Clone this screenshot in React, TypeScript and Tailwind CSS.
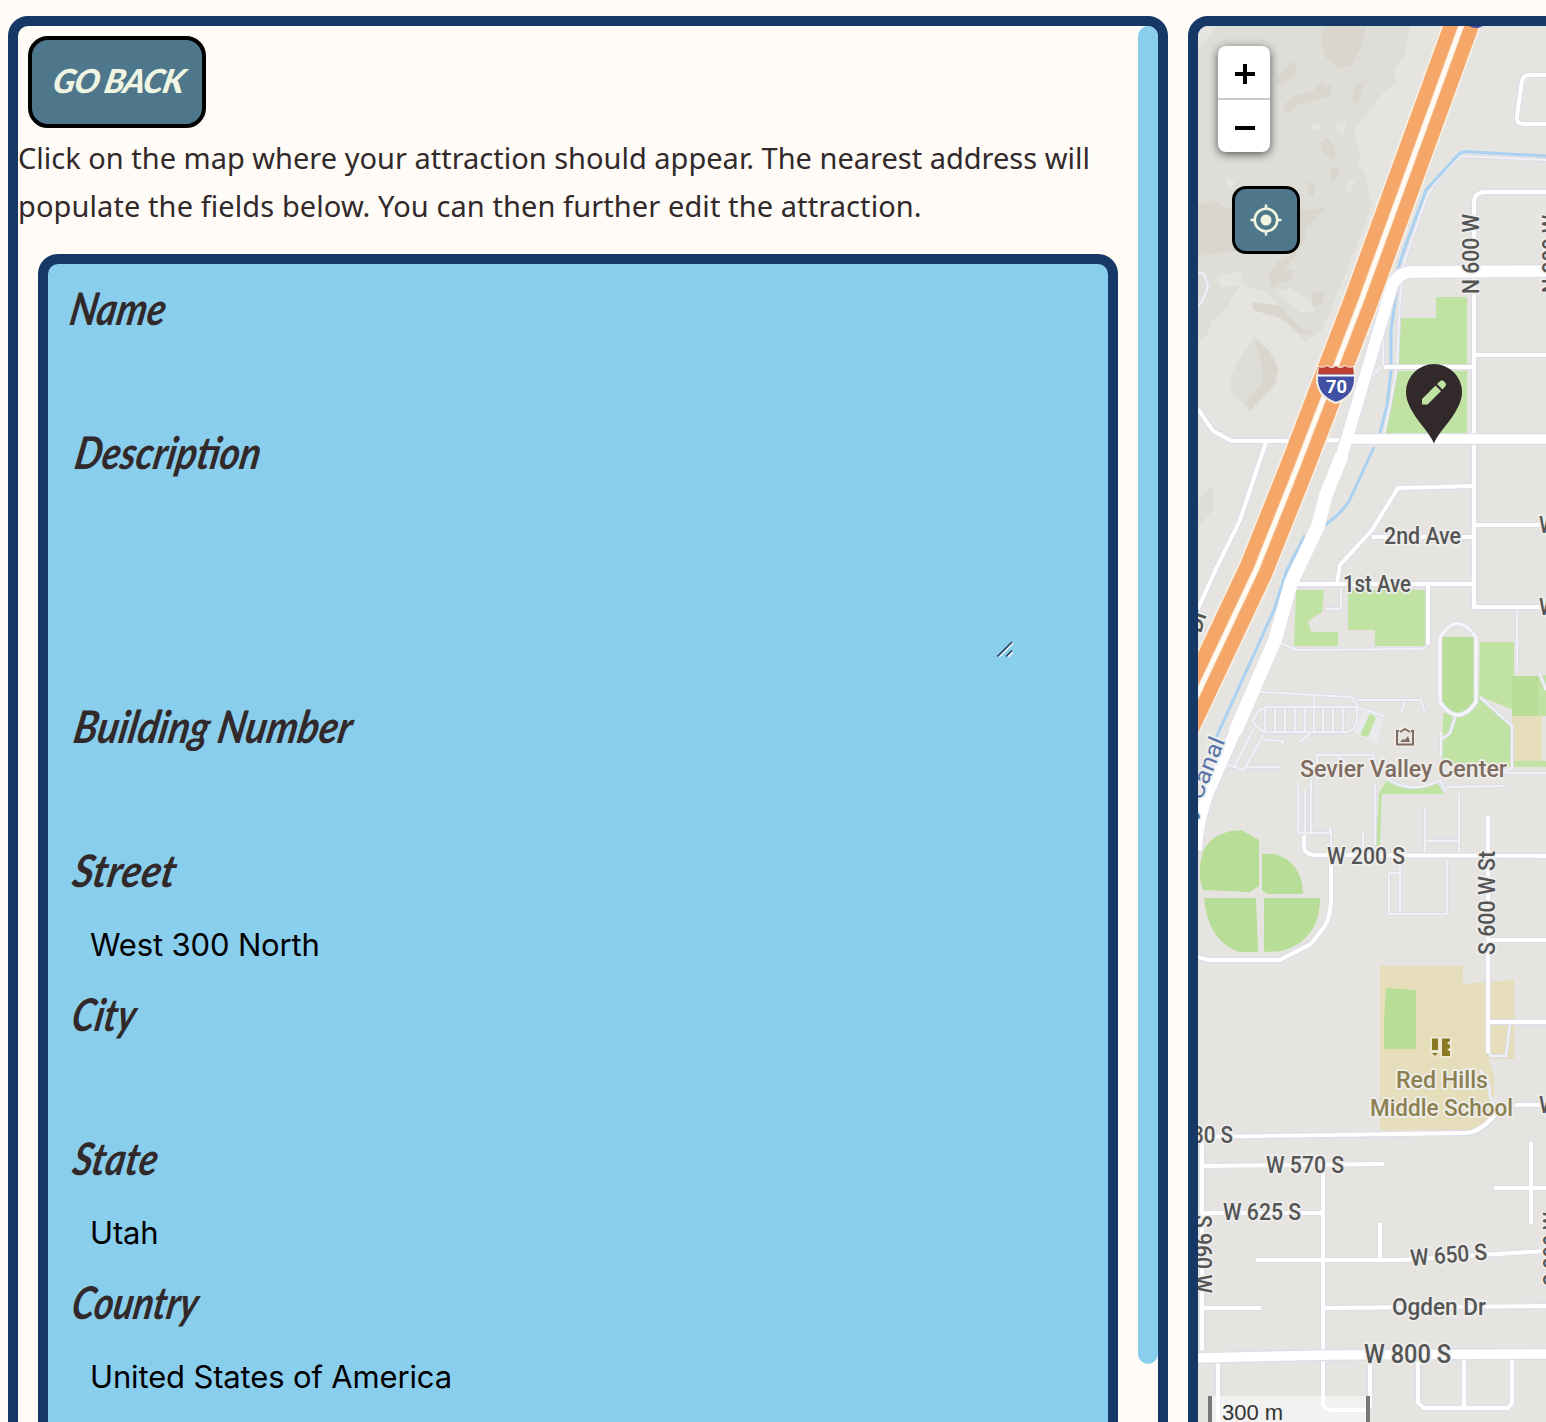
import React from "react";

type Field = { label: string; value?: string; tall?: boolean; fit: string };

const fields: Field[] = [
  { label: "Name", fit: "ml-[3px] scale-x-[0.85]" },
  { label: "Description", tall: true, fit: "ml-[8px] scale-x-[0.85]" },
  { label: "Building Number", fit: "ml-[7px] scale-x-[0.87]" },
  { label: "Street", value: "West 300 North", fit: "ml-[6px] scale-x-[0.90]" },
  { label: "City", fit: "ml-[5px] scale-x-[0.82]" },
  { label: "State", value: "Utah", fit: "ml-[6px] scale-x-[0.85]" },
  { label: "Country", value: "United States of America", fit: "ml-[5px] scale-x-[0.82]" },
];

function ResizeGrip() {
  return (
    <svg className="absolute bottom-[34px] left-[929px]" width="17" height="17" viewBox="0 0 17 17" fill="none">
      <path d="M2 16L16 2M11 16l5-5" stroke="#e3f1f8" strokeWidth="1.8" />
      <path d="M.5 15.5L15 1M9 15.5l6-6" stroke="#26465a" strokeWidth="1.6" />
    </svg>
  );
}

function FieldRow({ label, value, tall, fit }: Field) {
  return (
    <div>
      <div className="flex h-[72px] items-center">
        <label
          className={`inline-block origin-left -translate-y-[2px] -skew-x-12 whitespace-nowrap font-['Lato'] text-[45px] font-bold italic leading-[72px] text-[#32292a] ${fit}`}
        >
          {label}
        </label>
      </div>
      <div className={tall ? "relative h-[202px]" : "h-[72px]"}>
        {tall ? <ResizeGrip /> : null}
        {value ? (
          <span className="block pl-[22px] pt-[5px] font-['Inter'] text-[31px] leading-[64px] tracking-[-0.15px] text-black">{value}</span>
        ) : null}
      </div>
    </div>
  );
}

const minor = [
  "M1546 192H1484Q1474 193 1474 202V607H1546",
  "M1474 355H1546",
  "M1384 367H1474",
  "M1474 525H1546",
  "M1474 486L1398 488L1372 530L1340 565L1337 583",
  "M1372 537H1474",
  "M1296 584H1474",
  "M1428 584V644",
  "M1488 816V1053",
  "M1304 836V848Q1305 854 1314 855L1546 856",
  "M1331 858V898Q1331 915 1325 926L1311 944L1280 960H1208L1198 957",
  "M1488 940H1546",
  "M1488 1022H1546",
  "M1196 1137L1465 1133Q1475 1133 1486 1124L1498 1112",
  "M1515 1105H1546",
  "M1202 1130V1350",
  "M1202 1166L1384 1164",
  "M1202 1213H1322",
  "M1323 1172V1403Q1324 1410 1331 1410H1366Q1370 1410 1370 1403V1362",
  "M1256 1260H1400L1546 1251",
  "M1380 1223V1258",
  "M1202 1308H1261",
  "M1324 1308L1546 1306",
  "M1218 1362V1422",
  "M1418 1362V1403L1424 1408H1508L1512 1403V1358",
  "M1464 1358V1406",
  "M1531 1142V1224",
  "M1494 1188H1546",
  "M1546 75H1530Q1523 75 1522 81L1517 116Q1516 124 1524 124H1546",
  "M1198 409L1213 431L1232 441H1290L1345 440",
  "M1266 442L1240 520L1215 571L1198 609",
];

const paths = [
  "M1198 272L1204 274L1208 286L1203 300L1198 306",
  "M1546 160L1462 156Q1440 172 1427 196L1404 262L1400 300L1397 365L1391 400L1384 433",
  "M1381 367L1369 380M1383 300V366",
  "M1341 587V609H1326",
  "M1280 643L1297 650L1420 649Q1426 649 1428 643",
  "M1517 608V670",
  "M1260 692L1350 697Q1356 699 1357 707V720Q1354 732 1346 732H1265Q1254 727 1253 721L1258 711L1266 707H1356L1384 716",
  "M1265 708V732M1275 708V732M1285 708V732M1295 708V732M1305 708V732M1314 695V732M1323 708V732M1333 708V732M1343 708V732",
  "M1358 700H1421L1425 713M1405 702L1400 714",
  "M1253 730L1234 767M1264 734L1243 771M1226 764L1243 770L1248 767H1280M1263 740L1283 741V746M1310 733L1300 742",
  "M1317 780V755H1373L1376 768M1337 755L1345 762",
  "M1298 783V833H1330V828M1311 780V833M1305 790V836",
  "M1331 830V856M1363 832V855M1375 784V845",
  "M1425 808V855M1459 793V855M1425 841H1460",
  "M1446 787L1506 786",
  "M1389 873V914H1447V860M1389 873H1399M1400 858V914",
  "M1488 1050L1491 1056H1506L1510 1024",
  "M1441 732V755M1480 697L1512 726V768L1498 775M1455 717L1450 733L1442 739",
  "M1387 779Q1412 795 1440 780L1446 792",
  "M1480 1070Q1490 1080 1490 1096L1497 1110",
  "M1506 773H1546",
  "M1539 672L1546 690",
];

type Label = { t: string; x: number; y: number; w: number; size?: number; fill?: string; rot?: number; weight?: number };

const labels: Label[] = [
  { t: "2nd Ave", x: 1384, y: 544, w: 77 },
  { t: "1st Ave", x: 1343, y: 592, w: 68 },
  { t: "W 200 S", x: 1327, y: 864, w: 78 },
  { t: "80 S", x: 1192, y: 1143, w: 41 },
  { t: "W 570 S", x: 1266, y: 1173, w: 78 },
  { t: "W 625 S", x: 1223, y: 1220, w: 78 },
  { t: "W 650 S", x: 1411, y: 1266, w: 77, rot: -5 },
  { t: "Ogden Dr", x: 1392, y: 1315, w: 94 },
  { t: "W 800 S", x: 1364, y: 1363, w: 87, size: 25 },
  { t: "N 600 W", x: 1479, y: 294, w: 80, rot: -90 },
  { t: "S 600 W St", x: 1495, y: 955, w: 104, rot: -90 },
  { t: "S 960 W", x: 1195, y: 1215, w: 78, rot: 90 },
  { t: "N 300 W", x: 1559, y: 293, w: 78, rot: -90 },
  { t: "S 300 W", x: 1560, y: 1286, w: 74, rot: -90 },
  { t: "W 300 N", x: 1539, y: 533, w: 78 },
  { t: "W 100 N", x: 1539, y: 615, w: 78 },
  { t: "W 500 S", x: 1539, y: 1113, w: 78 },
  { t: "Sevier Valley Center", x: 1300, y: 777, w: 207, fill: "#806c60", weight: 500 },
  { t: "Red Hills", x: 1396, y: 1088, w: 92, fill: "#8c8050", weight: 500 },
  { t: "Middle School", x: 1370, y: 1116, w: 143, fill: "#8c8050", weight: 500 },
];

const highway = "M1467 10L1361 301L1296 470L1256 570L1180 731";
const arterial =
  "M1546 271L1410 272Q1397 274 1392 286L1366 374L1342 455L1326 495L1318 526L1291 583L1275 640L1235 732L1208 793Q1198 820 1196 850";

function MapTiles() {
  return (
    <svg className="block" width="348" height="1396" viewBox="1198 26 348 1396" fill="none" strokeLinejoin="round">
      <path fill="#e5e4e0" d="M1198 26h348v1396h-348z" />
      <g fill="#deddd8">
        <path d="M1216 26L1203 45L1198 48V342L1206 336L1212 320L1225 310L1240 285L1268 292L1288 325L1305 342L1322 330L1350 263L1372 205L1362 165L1354 130L1380 96L1396 83L1394 69L1405 55L1410 26z" />
        <path d="M1198 500L1213 485V510L1198 528z" />
        <path d="M1255 336L1275 356L1277 382L1250 412L1232 393L1230 377L1245 350z" />
      </g>
      <g fill="#d9d6ce">
        <path d="M1324 26H1366L1362 45L1352 65L1340 69L1326 58L1320 40z" />
        <path d="M1198 205L1215 200L1224 208L1240 206V250L1198 256z" />
        <path d="M1275 82L1292 61L1298 64L1293 77L1280 86zM1283 105L1293 96L1312 92L1320 82L1326 87L1332 85L1330 95L1310 103L1299 104L1287 115zM1352 99L1356 85L1366 80L1362 92L1358 103zM1320 142L1328 138L1335 149L1334 161L1321 151zM1330 168L1338 165L1339 177L1331 181zM1308 180L1315 186L1314 197L1307 194zM1300 210L1326 208L1312 222L1305 228L1306 236L1298 252L1285 270L1272 288L1268 273L1278 262L1292 255z" />
        <path d="M1255 340L1268 350L1279 370L1273 386L1251 410L1245 403L1262 384L1262 366zM1253 302L1280 306L1300 328L1318 335L1300 333L1280 318L1253 310z" />
        <path d="M1312 294L1325 290L1322 304L1312 307zM1270 270L1294 270L1290 280L1275 285z" />
      </g>
      <g fill="#e5e4e0">
        <path d="M1226 178L1235 182L1232 188L1226 184zM1358 160L1367 166L1360 170zM1336 124L1346 122L1344 134L1337 131zM1346 184L1355 179L1351 192L1346 191zM1312 126L1320 123L1320 130L1312 129z" />
        <path d="M1276 292L1290 288L1310 300L1316 312L1300 312L1285 300zM1216 276L1240 272L1244 284L1222 288z" />
      </g>

      <g fill="#c0e3a4">
        <path d="M1401 318H1436V297H1467V367H1396zM1394 371H1467V433H1386z" />
        <path d="M1296 590H1324L1322 612L1308 621L1311 632H1338V646H1294zM1348 590H1425V646H1375V630H1348z" />
        <path d="M1480 642H1514V710L1479 696zM1443 714L1480 696L1511 726V768L1442 763z" />
        <path d="M1538 675H1546V716H1538zM1512 761H1546V767H1512zM1387 780L1405 787L1438 784L1444 794H1382L1380 846H1376L1379 793z" />
      </g>
      <path fill="#e6ddbb" d="M1512 716H1542V761H1512zM1380 966H1463V984L1514 980V1059H1488L1494 1075V1110L1479 1130H1380z" />
      <g fill="#b7dd96">
        <path d="M1440 637H1475V700L1466 713H1450L1440 701zM1512 676H1538V716H1512z" />
        <path d="M1386 988L1416 990V1049H1384V1020zM1200 870Q1200 832 1241 830L1259 840V886L1250 892L1203 890Q1199 880 1200 870zM1262 854H1275Q1302 862 1303 894H1267L1262 890zM1204 898H1256L1258 952H1240Q1208 942 1204 898zM1264 898H1320Q1320 940 1282 951L1264 952z" />
      </g>
      <path d="M1363 707L1385 715L1376 745L1354 732z" fill="#e9eaed" />
      <path d="M1370 713L1376 718L1368 737L1360 735z" fill="#c0e3a4" />

      {paths.map((d) => (
        <path key={d} d={d} stroke="#dcdde8" strokeWidth="3.8" />
      ))}
      {paths.map((d) => (
        <path key={d} d={d} stroke="#f0f1f5" strokeWidth="2" />
      ))}
      <path d="M1440 637Q1457 610 1476 637V702Q1458 728 1440 702z" stroke="#dedfe8" strokeWidth="5" />
      <path d="M1440 637Q1457 610 1476 637V702Q1458 728 1440 702z" stroke="#f7f7fb" strokeWidth="3" />

      <g stroke="#a9d1f1" strokeWidth="3">
        <path d="M1546 156L1472 152Q1463 150 1458 155L1426 190L1404 250L1396 275V295L1391 330V372L1387 405L1380 433" />
        <path d="M1374 447L1352 495Q1346 510 1325 525M1305 535L1287 570L1274 610L1216 738" />
      </g>

      {minor.map((d) => (
        <path key={d} d={d} stroke="#dcdde9" strokeWidth="6" />
      ))}
      {minor.map((d) => (
        <path key={d} d={d} stroke="#fff" strokeWidth="3.9" />
      ))}

      <path d="M1345 439H1546M1198 1358L1330 1355L1546 1354" stroke="#dcdde9" strokeWidth="12" />
      <path d={arterial} stroke="#dfe0ec" strokeWidth="14" />
      <path d="M1345 439H1546M1198 1358L1330 1355L1546 1354" stroke="#fff" strokeWidth="9.5" />
      <path d={arterial} stroke="#fff" strokeWidth="11.5" />
      <path d="M1342 455L1326 495L1318 526L1291 583L1275 640L1235 732" stroke="#fff" strokeWidth="13.5" />

      <path d={highway} stroke="#f8f1e6" strokeWidth="37" />
      <path d={highway} stroke="#f4a769" strokeWidth="34" />
      <path d={highway} stroke="#f3d8bd" strokeWidth="6.4" />
      <path d={highway} stroke="#fffaf2" strokeWidth="4.6" />
      <path d="M1469 26Q1476 30 1483 26z" fill="#4150a2" />

      <path d="M1319 367Q1323 369 1327 366Q1332 370 1336 366Q1340 370 1345 366Q1349 369 1353 367L1355 377Q1356 396 1336 403Q1316 396 1317 377z" fill="#4150a2" stroke="#f2eee8" strokeWidth="2" />
      <path d="M1319 367Q1323 369 1327 366Q1332 370 1336 366Q1340 370 1345 366Q1349 369 1353 367L1354 374H1318z" fill="#bd4034" />
      <path d="M1318 375.5H1354" stroke="#fff" strokeWidth="2" />
      <text x="1326" y="393" textLength="21" lengthAdjust="spacingAndGlyphs" fill="#fff" fontFamily="Roboto" fontWeight="700" fontSize="19">70</text>

      <path d="M1396 731V745H1413V731M1400 731L1405 728L1410 731" stroke="#eee9e5" strokeWidth="4" />
      <path d="M1397 731V744.5H1413V731M1396 731H1399M1411 731H1414M1400 732L1405 729L1410 732" stroke="#806c60" strokeWidth="2" />
      <path d="M1400 742L1403 739L1405 740L1408 736L1410 742z" fill="#806c60" />
      <path d="M1430 1037H1440V1053L1435 1058L1430 1053zM1440 1037H1452V1058H1440z" fill="#efe9d4" />
      <path d="M1432 1038.500H1438V1050H1432zM1432 1053H1438L1435 1056zM1442 1038.500H1450V1041L1447 1043L1450 1045V1048L1447 1049.500L1450 1051.500V1056H1442z" fill="#8b7a25" />

      <g fontFamily="Roboto" strokeWidth="3.5" stroke="#eeeeec" paintOrder="stroke">
        {labels.map((l) => (
          <text
            key={l.t + l.x}
            x={l.x}
            y={l.y}
            textLength={l.w}
            lengthAdjust="spacingAndGlyphs"
            fontSize={l.size ?? 23}
            fontWeight={l.weight ?? 500}
            fill={l.fill ?? "#555555"}
            transform={l.rot ? `rotate(${l.rot} ${l.x} ${l.y})` : undefined}
          >
            {l.t}
          </text>
        ))}
        <text x="1198" y="624" transform="rotate(-72 1206 627)" fontSize="22" fontWeight="500" fill="#505050">Dr</text>
        <text x="1193" y="807" transform="rotate(-68 1202 812)" fontSize="23" textLength="84" lengthAdjust="spacingAndGlyphs" fill="#5874a8">y Canal</text>
      </g>

      <path d="M1434 443.500C1429 430 1406 412 1406 392A28 28 0 0 1 1462 392C1462 412 1439 430 1434 443.500z" fill="#32292a" />
      <path d="M1422 399L1435.500 385.500L1441 391L1427.500 404.500H1422zM1437 384L1440.500 380.800Q1442 379.500 1443.500 381L1445.500 383Q1447 384.500 1445.500 386L1442.500 389.500z" fill="#c0e3a4" />
    </svg>
  );
}

function ZoomControl() {
  return (
    <div className="absolute left-5 top-5 flex w-[52px] flex-col overflow-hidden rounded-[8px] bg-white shadow-[0_2px_10px_rgba(0,0,0,0.65)]">
      <button aria-label="Zoom in" className="flex h-[54px] items-center justify-center border-b-2 border-[#ccc]">
        <svg width="22" height="22" viewBox="0 0 22 22" className="ml-[2px] mt-[3px]">
          <path d="M1 11h20M11 1v20" stroke="#000" strokeWidth="4" />
        </svg>
      </button>
      <button aria-label="Zoom out" className="flex h-[52px] items-center justify-center">
        <svg width="22" height="22" viewBox="0 0 22 22" className="ml-[2px] mt-[3px]">
          <path d="M1 11h20" stroke="#000" strokeWidth="4" />
        </svg>
      </button>
    </div>
  );
}

export default function App() {
  return (
    <div className="flex h-[1422px] w-[1546px] items-start gap-5 overflow-hidden bg-[#fffbf7] pl-2 pt-4">
      <section className="flex h-[1560px] w-[1160px] shrink-0 overflow-hidden rounded-[20px] border-[10px] border-[#153867]">
        <div className="flex w-[1120px] shrink-0 flex-col">
          <button className="ml-[10px] mt-[10px] flex h-[92px] w-[178px] shrink-0 items-center justify-center rounded-[20px] border-4 border-black bg-[#4f778b]">
            <span className="inline-block -translate-y-[2px] -skew-x-12 whitespace-nowrap pl-[4px] font-['Lato'] text-[33px] font-black italic leading-none tracking-[-1px] text-[#f0f5e1]">
              GO BACK
            </span>
          </button>
          <p className="mt-[6px] shrink-0 whitespace-nowrap font-['Noto_Sans'] text-[29px] leading-[48px] text-[#32292a]">
            Click on the map where your attraction should appear. The nearest address will
            <br />
            <span className="tracking-[0.09px]">populate the fields below. You can then further edit the attraction.</span>
          </p>
          <form className="ml-5 mt-6 h-[1240px] w-[1080px] shrink-0 rounded-[20px] border-[10px] border-[#153867] bg-[#8aceed] px-5 pt-[10px]">
            {fields.map((f) => (
              <FieldRow key={f.label} {...f} />
            ))}
          </form>
        </div>
        <div className="h-[1338px] w-5 shrink-0 rounded-[10px] bg-[#8aceed]" />
      </section>

      <section className="relative h-[1460px] w-[600px] shrink-0 overflow-hidden rounded-[20px] border-[10px] border-[#153867] bg-[#e5e4e0]">
        <MapTiles />
        <ZoomControl />
        <button
          aria-label="Locate me"
          className="absolute left-[34px] top-[160px] flex h-[68px] w-[68px] items-center justify-center rounded-[14px] border-[3px] border-black bg-[#4f778b]"
        >
          <svg width="32" height="32" viewBox="0 0 32 32" fill="none" stroke="#f0f5e1" strokeWidth="2.6">
            <circle cx="16" cy="16" r="11.300" />
            <circle cx="16" cy="16" r="5.500" fill="#f0f5e1" stroke="none" />
            <path d="M16 .5V5M16 27v4.500M.5 16H5M27 16h4.500" />
          </svg>
        </button>
        <div className="absolute left-[10px] top-[1370px] h-[40px] w-[162px] border-x-4 border-[#777] bg-white/50 pl-[10px] font-['Liberation_Sans'] text-[22px] leading-[33px] text-[#333]">
          300 m
        </div>
      </section>
    </div>
  );
}
